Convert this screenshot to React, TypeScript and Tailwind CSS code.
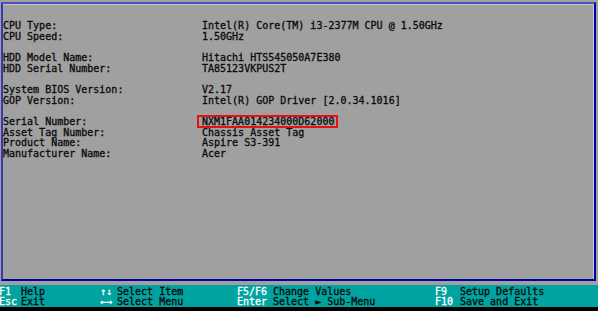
import React from "react";

const rows: ([string, string] | null)[] = [
  ["CPU Type:", "Intel(R) Core(TM) i3-2377M CPU @ 1.50GHz"],
  ["CPU Speed:", "1.50GHz"],
  null,
  ["HDD Model Name:", "Hitachi HTS545050A7E380"],
  ["HDD Serial Number:", "TA85123VKPUS2T"],
  null,
  ["System BIOS Version:", "V2.17"],
  ["GOP Version:", "Intel(R) GOP Driver [2.0.34.1016]"],
  null,
  ["Serial Number:", "NXM1FAA014234000D62000"],
  ["Asset Tag Number:", "Chassis Asset Tag"],
  ["Product Name:", "Aspire S3-391"],
  ["Manufacturer Name:", "Acer"],
];

const mono = { fontFamily: '"DejaVu Sans Mono", "Liberation Mono", monospace' };

export default function App() {
  return (
    <div
      className="w-[598px] h-[311px] bg-[#a0a0a0] flex flex-col overflow-hidden text-[10px] leading-[10.667px] text-[#0a0a0a] [-webkit-text-stroke:0.3px]"
      style={mono}
    >
      <div className="mt-[2px] ml-[1px] w-[595px] h-[279px] border-2 border-t-[#5050b8] border-l-[#3838b0] border-r-[#0000a8] border-b-[#0000a8] shrink-0">
        <div className="h-full border-t border-r border-t-[#c4c4d0] border-r-[#c8c8d4] pt-[16px] pl-0">
          {rows.map((r, i) =>
            r === null ? (
              <div key={i} className="h-[10.667px]" />
            ) : (
              <div key={i} className="grid grid-cols-[199px_1fr] h-[10.667px] whitespace-pre">
                <span>{r[0]}</span>
                {r[0] === "Serial Number:" ? (
                  <span className="relative">
                    <span className="absolute left-[-5px] top-[-2px] w-[141px] h-[13.5px] border-2 border-[#e81010]" />
                    {r[1]}
                  </span>
                ) : (
                  <span>{r[1]}</span>
                )}
              </div>
            )
          )}
        </div>
      </div>
      <div className="mt-[4px] h-[22px] bg-[#00a39f] pt-[1.5px] shrink-0">
        <div className="ml-[-1px] grid grid-cols-[22px_79px_17px_120px_36px_162px_25px_1fr] whitespace-pre text-[#0a0a0a]">
          <span className="text-white [-webkit-text-stroke-color:white]">F1</span>
          <span>Help</span>
          <span className="text-white [-webkit-text-stroke-color:white]">↑↓</span>
          <span>Select Item</span>
          <span className="text-white [-webkit-text-stroke-color:white]">F5/F6</span>
          <span>Change Values</span>
          <span className="text-white [-webkit-text-stroke-color:white]">F9</span>
          <span>Setup Defaults</span>
          <span className="text-white [-webkit-text-stroke-color:white]">Esc</span>
          <span>Exit</span>
          <span className="text-white [-webkit-text-stroke-color:white]">←→</span>
          <span>Select Menu</span>
          <span className="text-white [-webkit-text-stroke-color:white]">Enter</span>
          <span>Select ► Sub-Menu</span>
          <span className="text-white [-webkit-text-stroke-color:white]">F10</span>
          <span>Save and Exit</span>
        </div>
      </div>
      <div className="flex-1 bg-black" />
    </div>
  );
}
